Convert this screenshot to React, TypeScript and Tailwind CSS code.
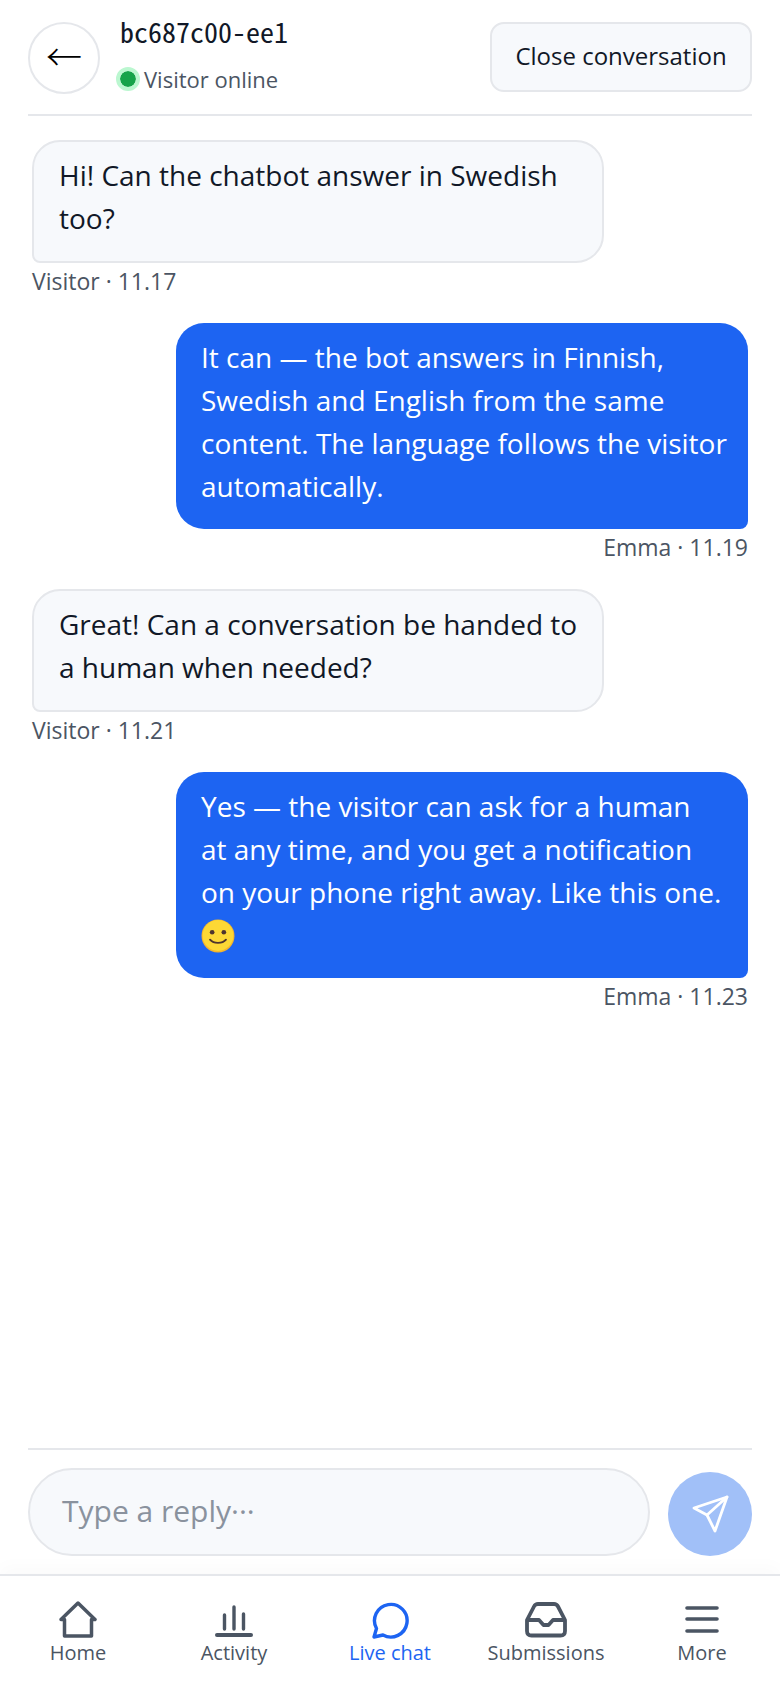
const sans = "font-['Open_Sans',sans-serif]";

const messages = [
  { from: 'them', text: 'Hi! Can the chatbot answer in Swedish too?', meta: 'Visitor · 11.17' },
  {
    from: 'me',
    text: 'It can — the bot answers in Finnish, Swedish and English from the same content. The language follows the visitor automatically.',
    meta: 'Emma · 11.19',
  },
  { from: 'them', text: 'Great! Can a conversation be handed to a human when needed?', meta: 'Visitor · 11.21' },
  {
    from: 'me',
    text: 'Yes — the visitor can ask for a human\nat any time, and you get a notification\non your phone right away. Like this one.\n',
    meta: 'Emma · 11.23',
    smile: true,
  },
];

function Smile() {
  return (
    <svg viewBox="0 0 32 32" className="inline-block h-[34px] w-[34px] align-[-7px]">
      <circle cx="16" cy="16" r="15.5" fill="#f5b52c" />
      <circle cx="16" cy="15.500" r="14.500" fill="#fdd835" />
      <circle cx="10.500" cy="12.500" r="2.200" fill="#4e342e" />
      <circle cx="21.500" cy="12.500" r="2.200" fill="#4e342e" />
      <path d="M8.500 19.500c3.500 4 11.500 4 15 0" fill="none" stroke="#4e342e" strokeWidth="1.800" strokeLinecap="round" />
    </svg>
  );
}

function HomeIcon() {
  return (
    <svg viewBox="0 0 40 38" className="h-[38px] w-[40px]" fill="none" stroke="currentColor" strokeWidth="3.500" strokeLinejoin="round" strokeLinecap="round">
      <path d="M3 18.500 20 2l17 16.500h-3.500V35h-27V18.500z" />
    </svg>
  );
}

function ActivityIcon() {
  return (
    <svg viewBox="0 0 38 38" className="h-[38px] w-[38px]" fill="none" stroke="currentColor" strokeWidth="3.400" strokeLinecap="round">
      <path d="M9.500 28V14M19 28V6M28.500 28V13" />
      <path d="M2 34h34" strokeWidth="4" />
    </svg>
  );
}

function ChatIcon() {
  return (
    <svg viewBox="0 0 38 38" className="h-[38px] w-[38px]" fill="none" stroke="currentColor" strokeWidth="3.400" strokeLinejoin="round">
      <path d="M3 36l2.500-8.500A16.300 16.300 0 1 1 12 34z" />
    </svg>
  );
}

function InboxIcon() {
  return (
    <svg viewBox="0 0 42 38" className="h-[38px] w-[42px]" fill="none" stroke="currentColor" strokeWidth="3.800" strokeLinejoin="round" strokeLinecap="round">
      <path d="M13 3h16c2 0 3 .6 4 2.500l7 13.500v11c0 3-1.500 4.500-4.500 4.500h-29C3.500 34.500 2 33 2 30V19L9 5.500C10 3.600 11 3 13 3z" />
      <path d="M3 19h11l4.500 5h5L28 19h11" />
    </svg>
  );
}

function MoreIcon() {
  return (
    <svg viewBox="0 0 36 38" className="h-[38px] w-[36px]" fill="none" stroke="currentColor" strokeWidth="3.600" strokeLinecap="round">
      <path d="M3 7h30M3 18h30M3 30h30" />
    </svg>
  );
}

function SendIcon() {
  return (
    <svg viewBox="0 0 40 40" className="h-[40px] w-[40px]" fill="none" stroke="white" strokeWidth="2.800" strokeLinejoin="round" strokeLinecap="round">
      <path d="M37 3 4 14l13 7 8 16z" />
      <path d="M37 3 17 21" />
    </svg>
  );
}

const tabs = [
  { label: 'Home', icon: <HomeIcon /> },
  { label: 'Activity', icon: <ActivityIcon /> },
  { label: 'Live chat', icon: <ChatIcon />, active: true },
  { label: 'Submissions', icon: <InboxIcon /> },
  { label: 'More', icon: <MoreIcon /> },
];

export default function App() {
  return (
    <div className={`flex h-[1688px] w-[780px] flex-col bg-white ${sans}`}>
      <div className="mx-7 box-content flex h-[92px] shrink-0 items-start justify-between border-b-2 border-[#e5e7eb] pt-[22px]">
        <div className="flex gap-5">
          <button className="flex h-[72px] w-[72px] items-center justify-center rounded-full border-2 border-[#e5e7eb] pb-[6px] font-['Noto_Sans_CJK_SC',sans-serif] text-[36px] leading-none font-light text-black">
            ←
          </button>
          <div>
            <div className="font-['Noto_Sans_Mono_CJK_SC','DejaVu_Sans_Mono',monospace] text-[28px] leading-[18px] text-[#111827]">bc687c00-ee1</div>
            <div className="mt-[26px] flex items-center gap-[8px] text-[22px] leading-[26px] text-[#4b5563]">
              <span className="h-[16px] w-[16px] rounded-full bg-[#16a34a] outline-[4px] outline-[#bbf7d0]" />
              Visitor online
            </div>
          </div>
        </div>
        <button className="h-[70px] w-[262px] rounded-[14px] border-2 border-[#e5e7eb] bg-[#f7f9fc] pb-[3px] text-[24px] text-[#111827]">
          Close conversation
        </button>
      </div>

      <div className="flex flex-1 flex-col px-8 pt-[24px]">
        {messages.map((m) => (
          <div key={m.meta} className={m.from === 'me' ? 'mb-[29px] flex flex-col items-end' : 'mb-[29px] flex flex-col items-start'}>
            {m.from === 'me' ? (
              <div className="w-[572px] rounded-[28px] rounded-br-[8px] bg-[#1d64f2] pt-[13px] pr-[20px] pb-[21px] pl-[25px] text-[28px] leading-[43px] whitespace-pre-line text-white">
                {m.text}
                {m.smile ? <Smile /> : null}
              </div>
            ) : (
              <div className="w-[572px] rounded-[28px] rounded-bl-[8px] border-2 border-[#e5e7eb] bg-[#f7f9fc] pt-[12px] pr-[20px] pb-[21px] pl-[25px] text-[28px] leading-[43px] text-[#111827]">
                {m.text}
              </div>
            )}
            <div className="mt-[5px] text-[23px] leading-[26px] text-[#4b5563]">{m.meta}</div>
          </div>
        ))}
      </div>

      <div className="mx-7 flex h-[126px] shrink-0 items-center gap-[18px] border-t-2 border-[#e5e7eb]">
        <div className="flex h-[88px] flex-1 items-center rounded-full border-2 border-[#e5e7eb] bg-[#f7f9fc] px-8 pb-[4px] text-[30px] text-[#8a929e]">
          Type a reply···
        </div>
        <button className="mt-[3px] flex h-[84px] w-[84px] items-center justify-center rounded-full bg-[#a1c0f8]">
          <SendIcon />
        </button>
      </div>

      <div className="flex h-[114px] shrink-0 border-t-2 border-[#e5e7eb] pt-[25px] shadow-[0_-8px_16px_rgba(0,0,0,0.02)]">
        {tabs.map((t) => (
          <div key={t.label} className={t.active ? 'flex flex-1 flex-col items-center text-[#1d64f2]' : 'flex flex-1 flex-col items-center text-[#4b5563]'}>
            <div className="flex h-[38px] items-center">{t.icon}</div>
            <div className="mt-[1px] text-[20px] leading-[26px]">{t.label}</div>
          </div>
        ))}
      </div>
    </div>
  );
}
